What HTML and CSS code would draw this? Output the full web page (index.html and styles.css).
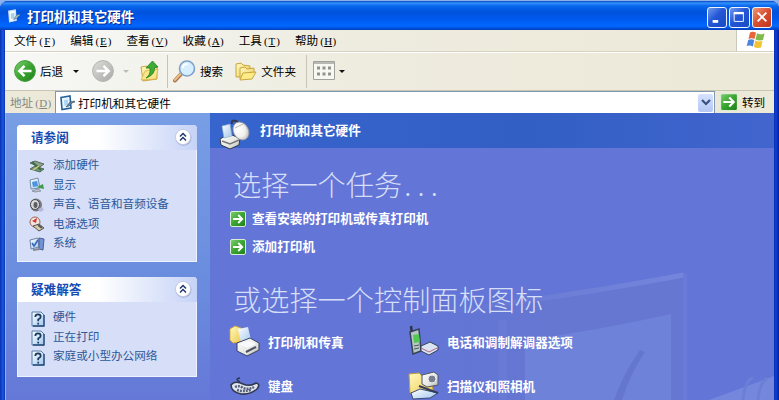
FILE: index.html
```html
<!DOCTYPE html>
<html lang="zh-CN">
<head>
<meta charset="utf-8">
<title>打印机和其它硬件</title>
<link rel="stylesheet" href="styles.css">
</head>
<body>
<svg class="defs" width="0" height="0" aria-hidden="true">
  <defs>
    <linearGradient id="green" x1="0" y1="0" x2="1" y2="1"><stop offset="0" stop-color="#7ed070"/><stop offset=".5" stop-color="#3ba431"/><stop offset="1" stop-color="#1c8019"/></linearGradient>
    <linearGradient id="gray" x1="0" y1="0" x2="1" y2="1"><stop offset="0" stop-color="#dcdcd8"/><stop offset="1" stop-color="#a9a9a7"/></linearGradient>
    <linearGradient id="folder" x1="0" y1="0" x2="1" y2="1"><stop offset="0" stop-color="#fffbc0"/><stop offset="1" stop-color="#eec951"/></linearGradient>
    <linearGradient id="paper" x1="0" y1="0" x2="1" y2="1"><stop offset="0" stop-color="#fff"/><stop offset="1" stop-color="#9fc6ee"/></linearGradient>
    <linearGradient id="metal" x1="0" y1="0" x2="1" y2="1"><stop offset="0" stop-color="#fff"/><stop offset=".6" stop-color="#e6e6e2"/><stop offset="1" stop-color="#b4b5b3"/></linearGradient>
    <radialGradient id="mouse" cx=".4" cy=".35" r=".7"><stop offset="0" stop-color="#fff"/><stop offset=".6" stop-color="#f1f1ee"/><stop offset="1" stop-color="#b9bac0"/></radialGradient>
    <symbol id="hw" viewBox="0 0 16 16"><path d="M2 2.500 11 1l1 12-9 1.500z" fill="#eef7ff" stroke="#23619a" stroke-width="1.600"/><path d="M5 5l4-.5v5L5.500 11z" fill="#a9d5f8"/><path d="M15.500 6 11 7 7 12l3-1 3-3 3-1z" fill="#6b8492" stroke="#354f68" stroke-width=".6"/></symbol>
    <symbol id="hwlight" viewBox="0 0 16 16"><path d="M2 2.500 9.500 1l1 12-7.500 1.500z" fill="#f6fbff" stroke="#cfe3f3" stroke-width="1.400"/><path d="M4.500 5l4-.5v6l-4 1z" fill="#a9cfe8"/><path d="M14.500 6 11 7 7.500 12l3-1 3-3 1.500-1z" fill="#a9bfc2" stroke="#47688a" stroke-width=".7"/></symbol>
    <symbol id="go" viewBox="0 0 16 16"><rect x=".5" y=".5" width="15" height="15" rx="1.500" fill="url(#green)" stroke="#d9eed5"/><path d="M3 8h9M8.200 4l4 4-4 4" fill="none" stroke="#fff" stroke-width="1.900"/></symbol>
    <symbol id="help" viewBox="0 0 14 16"><path d="M1 1h9l3 3v11H1z" fill="url(#paper)" stroke="#577da9"/><path d="M13 4v11H2" fill="none" stroke="#254b79" stroke-width="1.300"/><path d="M4.300 6q0-2.600 2.700-2.600T9.700 6Q9.700 7.300 7.200 8.500v1.800M7.200 11.700v1.700" fill="none" stroke="#19395f" stroke-width="1.700"/></symbol>
    <symbol id="chev" viewBox="0 0 18 18"><circle cx="9.500" cy="9.800" r="8" fill="#8c9bc8" opacity=".65"/><circle cx="9" cy="9" r="7.600" fill="#fff" stroke="#c4cce5"/><path d="m6 8.500 3-3 3 3M6 12.500l3-3 3 3" fill="none" stroke="#223a70" stroke-width="1.500"/></symbol>
  </defs>
</svg>
<div class="window">
  <header class="titlebar">
    <svg class="title-icon" width="14" height="14"><use href="#hwlight"/></svg>
    <h1>打印机和其它硬件</h1>
    <div class="controls">
      <span class="ctl"><svg viewBox="0 0 20 20"><path d="M5 14.500h6" stroke="#fff" stroke-width="3"/></svg></span>
      <span class="ctl"><svg viewBox="0 0 20 20"><path d="M4.500 5.500h10v9h-10z" fill="none" stroke="#fff"/><path d="M4 5.500h11" stroke="#fff" stroke-width="2.500"/></svg></span>
      <span class="ctl close"><svg viewBox="0 0 20 20"><path d="m5 5 9.500 9.500M14.500 5 5 14.500" stroke="#fff" stroke-width="2"/></svg></span>
    </div>
  </header>

  <nav class="menubar">
    <span>文件<i>(<u>F</u>)</i></span><span>编辑<i>(<u>E</u>)</i></span><span>查看<i>(<u>V</u>)</i></span><span>收藏<i>(<u>A</u>)</i></span><span>工具<i>(<u>T</u>)</i></span><span>帮助<i>(<u>H</u>)</i></span>
    <div class="flag"><svg width="20" height="18" viewBox="0 0 20 18"><path d="M4 1.500Q7 0 10 1.700L8.500 8Q5.500 6.500 2.500 8z" fill="#e6653b"/><path d="M11 2.200Q14 4 18.500 2.500L17 9Q13 10 9.500 8.400z" fill="#80b94c"/><path d="M2.200 9Q5.500 7.500 8.200 9L7 15.500Q4 14 .7 15z" fill="#4c86dc"/><path d="M9.200 9.500Q12.500 11 16.500 10L15 16.500Q11 17.500 8 16z" fill="#f1c332"/></svg></div>
  </nav>

  <div class="toolbar">
    <svg class="round" width="22" height="22" viewBox="0 0 22 22"><circle cx="11" cy="11" r="10.400" fill="url(#green)" stroke="#3f9a39"/><path d="M17.500 11H6M10.500 5.800 5.300 11l5.200 5.200" fill="none" stroke="#fff" stroke-width="2.500"/></svg>
    <span class="label back">后退</span><b class="arrow"></b>
    <svg class="round fwd" width="22" height="22" viewBox="0 0 22 22"><circle cx="11" cy="11" r="10.400" fill="url(#gray)" stroke="#b2b2ae"/><path d="M4.500 11H16M11.500 5.800l5.200 5.200-5.200 5.200" fill="none" stroke="#fff" stroke-width="2.500"/></svg>
    <b class="arrow pale"></b>
    <svg class="up" width="20" height="22" viewBox="0 0 20 22"><path d="M1 7l6-1 2 2 8-1v12L3 21z" fill="url(#folder)" stroke="#c8a744"/><path d="M1 20 5 11l13-2-2 10z" fill="#f9e58a" stroke="#d0ae48" stroke-width=".7"/><path d="M6 18q5-3 4-10H6l6.500-7L18 7l-3.500.5Q15 15 6 18z" fill="#3dae35" stroke="#217b22" stroke-width=".8"/></svg>
    <i class="sep"></i>
    <svg class="search" width="23" height="23" viewBox="0 0 23 23"><path d="m9 13-7 7.500" stroke="#a8744c" stroke-width="4" stroke-linecap="round"/><path d="m8.500 13-6.700 7" stroke="#edbd87" stroke-width="2" stroke-linecap="round"/><circle cx="14" cy="8.500" r="7.500" fill="#d5efff" stroke="#7f9fc8" stroke-width="1.600"/><path d="M9.500 8q1-4.500 5.500-4" fill="none" stroke="#fff" stroke-width="2"/></svg>
    <span class="label">搜索</span>
    <svg class="folders" width="22" height="19" viewBox="0 0 22 19"><path d="M1 2l5-1 2 2 7 1v5L4 15H1z" fill="url(#folder)" stroke="#c7a640"/><path d="M5 6l5-1 2 2 7-1v6L5 17z" fill="url(#folder)" stroke="#c7a640"/><path d="m5 18 3-7 13-1-4 7z" fill="#fbec87" stroke="#c7a640"/></svg>
    <span class="label">文件夹</span>
    <i class="sep"></i>
    <svg class="views" width="22" height="20" viewBox="0 0 22 20"><path d="M.5.500h21v18H.5z" fill="#f8f8f3" stroke="#a2a29d"/><path d="M1 2h20" stroke="#b8b8b4" stroke-width="2"/><path d="M4 7h14M4 13h14" stroke="#92928d" stroke-width="3" stroke-dasharray="3 2.500"/></svg>
    <b class="arrow small"></b>
  </div>

  <div class="address">
    <span class="addr-label">地址<i>(<u>D</u>)</i></span>
    <div class="field"><svg width="16" height="16"><use href="#hw"/></svg><span>打印机和其它硬件</span><b class="drop"><svg width="10" height="7" viewBox="0 0 10 7"><path d="m1 1 4 4 4-4" fill="none" stroke="#39517f" stroke-width="2.200"/></svg></b></div>
    <svg class="go" width="18" height="18"><use href="#go"/></svg><span>转到</span>
  </div>

  <div class="content">
    <aside>
      <section class="panel see">
        <h2>请参阅<svg width="18" height="18"><use href="#chev"/></svg></h2>
        <ul>
          <li><svg viewBox="0 0 16 16"><path d="m1 5 5-2 9 3-4 3z" fill="#8ba288" stroke="#44574a" stroke-width=".8"/><path d="m1 11 5-3 9 3-4 3z" fill="#6f9973" stroke="#3e5b47" stroke-width=".8"/><path d="m3 4 9 8" stroke="#3e6b45" stroke-width="2"/><path d="m4 12 6-4" stroke="#e4c87c" stroke-width="1.500"/></svg>添加硬件</li>
          <li><svg viewBox="0 0 16 16"><path d="m1 3 8-2 2 10-9 1z" fill="url(#paper)" stroke="#778fae"/><path d="m3 5 5-1 1 5-5 1z" fill="#4b94df"/><path d="m3 14 6-2 3 2-6 1z" fill="#c2c7cc" stroke="#728095" stroke-width=".7"/><path d="m8 10 6-3 1 5-5-1z" fill="#459c48"/></svg>显示</li>
          <li><svg viewBox="0 0 16 16"><ellipse cx="7" cy="8" rx="6" ry="6.500" fill="#777b80"/><ellipse cx="6" cy="7.500" rx="4.500" ry="5" fill="#d7d8d9" stroke="#4d5055"/><ellipse cx="6.500" cy="8" rx="2" ry="3" fill="#5b5c64"/><path d="m9 12 4-2 2 3-4 2z" fill="#b9b6dc"/></svg>声音、语音和音频设备</li>
          <li><svg viewBox="0 0 16 16"><circle cx="6" cy="6" r="5" fill="#f0e5df" stroke="#9e6557"/><path d="m3 5 5-3-1 5z" fill="#d4382b"/><path d="m4 10 6-2 5 4-5 3z" fill="#d8d0a5" stroke="#57545a"/><path d="m9 9 4 3" stroke="#57545a" stroke-width="2"/></svg>电源选项</li>
          <li><svg viewBox="0 0 16 16"><path d="m1 4 8-2 1 9-8 2z" fill="url(#paper)" stroke="#6d83a8"/><path d="m10 2 5 1-1 11-4-1z" fill="#7091d3" stroke="#4e5f94"/><path d="m3 7 2 3 4-6" fill="none" stroke="#346bbc" stroke-width="1.700"/><path d="m4 14 7-1" stroke="#858994" stroke-width="2"/></svg>系统</li>
        </ul>
      </section>
      <section class="panel trouble">
        <h2>疑难解答<svg width="18" height="18"><use href="#chev"/></svg></h2>
        <ul>
          <li><svg><use href="#help"/></svg>硬件</li>
          <li><svg><use href="#help"/></svg>正在打印</li>
          <li><svg><use href="#help"/></svg>家庭或小型办公网络</li>
        </ul>
      </section>
    </aside>
    <main>
      <svg class="watermark" width="349" height="180" viewBox="425 220 349 180"><defs><linearGradient id="fade"><stop offset="0" stop-color="#6577d2" stop-opacity="0"/><stop offset=".5" stop-color="#6577d0"/></linearGradient><linearGradient id="edge" gradientUnits="userSpaceOnUse" x1="425" y1="0" x2="684" y2="0"><stop offset="0" stop-color="#7183da" stop-opacity="0"/><stop offset="1" stop-color="#7385dc"/></linearGradient></defs><path d="M425 309Q560 296 684 273l2 127H425z" fill="url(#fade)"/><path d="M425 314Q560 298 684 275" fill="none" stroke="url(#edge)" stroke-width="5"/><path d="M525 340Q600 330 671 314v86H525z" fill="#6f82d9"/><path d="M503 320v80" stroke="#7082d9" stroke-width="8" opacity=".35"/><path d="M685 274v126" stroke="#687bd8" stroke-width="4"/><path d="m640 350 5 2q-14 20-23 48h-8q10-28 26-50" fill="#6476ce"/><path d="m709 400 65-24v24z" fill="#7487dc"/><path d="M743 400q2-20 10-22M758 400q1-16 9-22" fill="none" stroke="#6c7fd6" stroke-width="3"/></svg>
      <div class="category">
        <svg width="32" height="31" viewBox="0 0 32 31"><path d="m1 20 9-5 11 4-1 7-9 4-9-4z" fill="url(#metal)" stroke="#31384d"/><path d="m3 7 8-2 2 12-8 2z" fill="url(#paper)" stroke="#89a9c6" stroke-width=".6"/><path d="m3 22 8 3 9-4" fill="none" stroke="#777" stroke-width="1.500"/><path d="M13 5q-1-5 4-3l3 2" fill="none" stroke="#34384b" stroke-width="2"/><ellipse cx="22" cy="12" rx="7.500" ry="9.500" transform="rotate(-30 22 12)" fill="url(#mouse)" stroke="#8b8e9a" stroke-width=".8"/><path d="m16 9 8-4" stroke="#aaa" stroke-width=".8"/></svg>
        <h2>打印机和其它硬件</h2>
      </div>
      <h3 class="pick">选择一个任务<span class="dots">...</span></h3>
      <div class="tasks">
        <a><svg width="16" height="16"><use href="#go"/></svg>查看安装的打印机或传真打印机</a>
        <a><svg width="16" height="16"><use href="#go"/></svg>添加打印机</a>
      </div>
      <h3 class="or">或选择一个控制面板图标</h3>
      <div class="applets">
        <a><svg width="32" height="32" viewBox="0 0 32 32"><path d="m1 4 5-3 6 2v14l-8 1-3-3z" fill="url(#folder)" stroke="#d49f35" stroke-width=".8"/><path d="m9 4 10-2 3 13-10 3z" fill="url(#paper)"/><path d="m8 18 13-5 9 5v7l-12 6-10-5z" fill="url(#metal)" stroke="#384264"/><path d="m11 19 10-3 6 3-9 4z" fill="#f9faff"/><path d="m17 27 10-5" stroke="#4d5164" stroke-width="2"/></svg>打印机和传真</a>
        <a><svg width="32" height="32" viewBox="0 0 32 32"><path d="m3 1 1 8" stroke="#283549" stroke-width="2.500"/><path d="m2 7 9-3 2 22-8 3z" fill="#b8c5c4" stroke="#354157" stroke-width="1.500"/><path d="m5 10 6-1 1 8-6 1z" fill="#50c951"/><path d="m6 21 5-1M6 24l5-1" stroke="#4a5c5c"/><path d="m13 21 9-4 8 4v4l-9 5-8-4z" fill="#dce4f2" stroke="#354157"/><path d="m13 23 8 4 8-4" fill="none" stroke="#a86882"/></svg>电话和调制解调器选项</a>
        <a><svg width="32" height="32" viewBox="0 0 32 32"><path d="M11 13q-6-3 0-4" fill="none" stroke="#303852" stroke-width="1.500"/><path d="M2 16q4-5 12-1 6 3 13-1 5 1 1 6-7 6-16 5Q2 23 2 16z" fill="#e1e5ed" stroke="#303852" stroke-width="1.600"/><path d="M6 18q4-2 8 1 6 2 11-1M8 21q6 2 14 0" fill="none" stroke="#59617b" stroke-width="2.400" stroke-dasharray="2 1"/></svg>键盘</a>
        <a><svg width="32" height="32" viewBox="0 0 32 32"><path d="m1 5 10-1 3 3h9l2 14-23 3z" fill="url(#folder)" stroke="#c49d3c"/><path d="m14 6 12-3 4 3v10l-11 2-5-3z" fill="url(#metal)" stroke="#525668"/><circle cx="24" cy="10" r="4" fill="#777f90" stroke="#eee"/><path d="m3 24 9-4 18 4-8 5-17 1z" fill="url(#paper)" stroke="#3e4c75"/><path d="m11 17 19 7" stroke="#353d56" stroke-width="2"/></svg>扫描仪和照相机</a>
      </div>
    </main>
  </div>
</div>
</body>
</html>
```
FILE: styles.css
```css
* { box-sizing: border-box; }
body { margin: 0; width: 779px; height: 400px; overflow: hidden; background: #8bb0ec; font-family: "Noto Sans CJK SC", sans-serif; font-size: 11.6px; color: #000; }
h1, h2, h3, ul { margin: 0; padding: 0; }
svg { display: block; flex: none; }
.defs { position: absolute; }
.window { height: 400px; margin-top: 1px; padding: 0 5px; border-radius: 8px 8px 0 0; background: linear-gradient(90deg, #0831b2 0, #1b59e0 3px, #0831b2 5px, #0831b2 774px, #103fd4 776px, #0020a0 779px); }
.titlebar { display: flex; align-items: center; height: 29px; margin: 0 -5px; padding: 0 7px 0 7px; border-radius: 8px 8px 0 0; background: linear-gradient(#0848bd 0, #3491ff 2px, #0867ec 5px, #0052dc 11px, #0059ee 18px, #0068ff 25px, #003ebd 29px); }
.title-icon { margin-right: 6px; }
h1 { color: #fff; font-size: 13.4px; font-weight: 700; text-shadow: 1px 1px #082c8a; }
.controls { display: flex; gap: 2px; margin-left: auto; padding-top: 3px; }
.ctl { width: 20.500px; height: 21px; border: 1px solid #eef4ff; border-radius: 3px; background: linear-gradient(135deg, #719cef, #2456d6 45%, #174bc5); }
.close { background: linear-gradient(135deg, #ef9777, #d84d30 50%, #bd351d); }
.menubar { display: flex; height: 22px; align-items: center; padding-left: 9px; gap: 15.200px; background: linear-gradient(90deg, #f8f9f9, #eeecdf 45%, #ece9d8); border-bottom: 1px solid #d7d3c0; }
.menubar span { width: 41px; white-space: nowrap; line-height: 18px; padding-bottom: 1px; }
.menubar i, .address i { display: inline-flex; justify-content: space-between; width: 16px; margin-left: 2px; font: 11px/13px "Liberation Serif", serif; }
.flag { align-self: stretch; margin-left: auto; width: 38px; background: #fff; border-left: 1px solid #c9c7ba; padding: 1px 0 0 9px; }
.toolbar { display: flex; height: 39px; align-items: center; padding: 0 0 1px 9px; background: linear-gradient(90deg, #f7f8f6, #eeecdf 45%, #ece9d8); border-top: 1px solid #fff; border-bottom: 1px solid #c8c5b4; }
.label { font-size: 11.600px; white-space: nowrap; }
.back { margin-left: 4px; width: 23px; }
.arrow { width: 0; height: 0; border: 3px solid transparent; border-top-color: #111; border-bottom: 0; margin-left: 10px; }
.fwd { margin-left: 13px; }
.pale { border-top-color: #bbb; margin-left: 9px; }
.up { margin-left: 11px; }
.sep { width: 1px; height: 33px; margin-left: 7px; background: #c7c4b5; }
.search { margin: 0 4px 0 5px; }
.folders { margin: 0 4px 0 12px; }
.toolbar .sep + .views { margin-left: 6px; }
.toolbar .label + .sep { margin-left: 10px; }
.small { margin-left: 4px; }
.address { display: flex; height: 22px; align-items: center; background: #ece9d8; }
.addr-label { width: 50px; padding-left: 5px; color: #87877f; white-space: nowrap; }
.field { display: flex; align-items: center; width: 660px; height: 22px; padding-left: 3px; border: 1px solid #8098b0; border-bottom: 0; background: #fff; }
.field span { margin-left: 3px; }
.drop { display: grid; place-items: center; width: 15px; height: 18px; margin: 0 1px 0 auto; border-radius: 2px; background: linear-gradient(#d5e1ff, #b4c7f5); }
.go { margin: 0 4px 0 5px; }
.content { display: flex; height: 287px; background: #6375d6; }
aside { width: 205px; flex: none; padding: 12px 14px 0 11px; background: linear-gradient(#789ee5, #698add 65%, #6578d7); border-left: 1px solid #8eb2f6; }
.panel { width: 180px; border: 1px solid #eef3ff; border-top: 0; border-radius: 4px 4px 0 0; background: #d6dff7; color: #215dc6; }
.see { height: 137px; }
.trouble { height: 100px; margin-top: 15px; }
.panel h2 { display: flex; align-items: center; height: 25px; margin: 0 -1px; padding: 0 5px 2px 14px; border-radius: 4px 4px 0 0; background: linear-gradient(90deg, #fff 45%, #c6d3f7); font-size: 12.600px; color: #174bb4; }
.panel h2 svg { margin-left: auto; }
.panel ul { list-style: none; padding: 5px 0 0 11px; }
.panel li { display: flex; align-items: center; height: 19.500px; line-height: 19.500px; color: #2c5799; white-space: nowrap; }
.panel li svg { width: 16px; height: 16px; margin: 2px 8px 0 0; }
.trouble li svg { width: 14px; margin: 4px 8px 0 2px; }
main { flex: 1; position: relative; min-width: 0; color: #fff; }
.watermark { position: absolute; right: 0; bottom: 0; }
.category { display: flex; align-items: center; height: 35px; padding-left: 9px; background: linear-gradient(90deg, #3765ce, #315fc4 55%, #4265ce); }
.category svg { margin-top: 8px; }
.category h2 { margin: -3px 0 0 9px; font-size: 12.600px; }
h3 { position: relative; height: 36px; padding-left: 23px; font-size: 28.200px; line-height: 36px; font-weight: 300; color: #d6dff7; white-space: nowrap; }
.pick { margin-top: 18px; }
.dots { letter-spacing: 6.200px; margin-left: 2px; }
.tasks { padding: 1px 0 0 20px; }
.tasks a { display: flex; align-items: center; height: 28.500px; gap: 6px; font-size: 12.600px; font-weight: 700; }
.tasks a svg { margin-top: 3px; }
.or { margin-top: 21px; }
.applets { position: relative; display: grid; grid-template-columns: 179px 220px; grid-auto-rows: 44px; padding: 2px 0 0 19px; }
.applets a { display: flex; align-items: center; gap: 7px; font-size: 12.600px; font-weight: 700; white-space: nowrap; }
```
